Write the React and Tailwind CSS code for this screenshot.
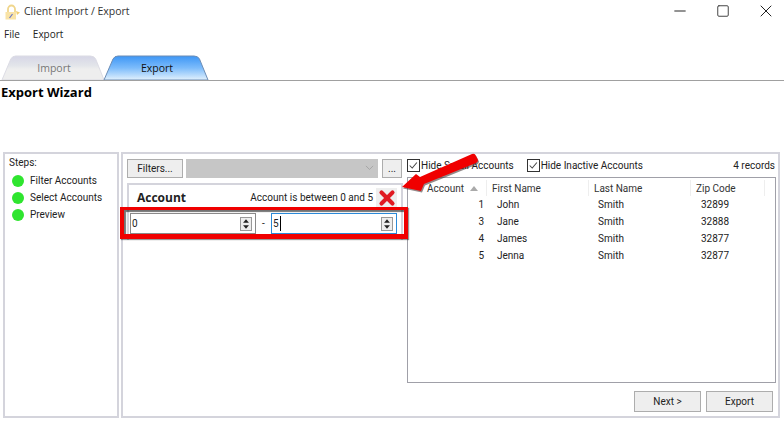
import { Minus, Square, X } from "lucide-react";

const rows = [
  { account: 1, first: "John", last: "Smith", zip: "32899" },
  { account: 3, first: "Jane", last: "Smith", zip: "32888" },
  { account: 4, first: "James", last: "Smith", zip: "32877" },
  { account: 5, first: "Jenna", last: "Smith", zip: "32877" },
];

function Spinner() {
  return (
    <div className="flex h-[14px] w-[12px] flex-col justify-between border border-[#999] bg-[#eee]">
      <svg viewBox="0 0 12 6" className="h-[6px] w-full">
        <path d="M2.5 5 6 1l3.5 4z" fill="#222" />
      </svg>
      <svg viewBox="0 0 12 6" className="h-[6px] w-full">
        <path d="M2.5 1 6 5l3.5-4z" fill="#222" />
      </svg>
    </div>
  );
}

function Check({ label }) {
  return (
    <div className="flex items-center gap-px">
      <div className="flex size-[13px] items-center justify-center border border-[#333] bg-white">
        <svg viewBox="0 0 13 13" className="size-[11px]">
          <path d="M2 6.5 5 9.5 10.5 3" fill="none" stroke="#444" strokeWidth="1.2" />
        </svg>
      </div>
      <span>{label}</span>
    </div>
  );
}

function Tab({ label, active }) {
  return (
    <div className={`relative flex h-[25px] items-center justify-center pl-[2px] pt-[3px] font-['Open_Sans',sans-serif] text-[10.5px] ${active ? "-ml-[2px] w-[106px] text-[#111]" : "w-[104px] text-[#777]"}`}>
      <svg viewBox="0 0 106 25" preserveAspectRatio="none" className="absolute inset-0 size-full">
        <defs>
          <linearGradient id={`tab-${label}`} x1="0" y1="0" x2="0" y2="1">
            {active ? (
              <>
                <stop offset="0" stopColor="#3d96f5" />
                <stop offset="0.5" stopColor="#7dbcfb" />
                <stop offset="1" stopColor="#e2f1fd" />
              </>
            ) : (
              <>
                <stop offset="0" stopColor="#d6d6e6" />
                <stop offset="0.4" stopColor="#e3e5ea" />
                <stop offset="0.55" stopColor="#eeeeee" />
                <stop offset="1" stopColor="#eeeeee" />
              </>
            )}
          </linearGradient>
        </defs>
        <path
          d="M1 25 L10 4 Q11.5 1 15 1 L91 1 Q95 1 96.5 4 L105 25 Z"
          fill={`url(#tab-${label})`}
          stroke={active ? "#6d8db5" : "#dcdce4"}
        />
      </svg>
      <span className="relative">{label}</span>
    </div>
  );
}

export default function App() {
  return (
    <div className="relative flex h-[422px] w-[784px] flex-col overflow-hidden bg-white font-['Roboto','Open_Sans',sans-serif] text-[10px] text-[#222]">
      {/* title bar */}
      <div className="flex h-[24px] items-center justify-between pl-[4px] font-['Open_Sans',sans-serif] text-[10.5px]">
        <div className="flex items-center gap-[4px]">
          <svg viewBox="0 0 16 16" className="size-[16px]">
            <path d="M4 8V5a3.5 3.5 0 0 1 7 0v3" fill="none" stroke="#f0d68c" strokeWidth="1.8" />
            <rect x="1.5" y="8" width="10.5" height="7.5" fill="#f9e3a6" />
            <path d="M5.5 14l3-4" stroke="#6a78c8" strokeWidth="1.2" />
            <path d="M12 7l4 1.5-3 2.5z" fill="#f0cc70" />
          </svg>
          <span className="text-[#333]">Client Import / Export</span>
        </div>
        <div className="flex items-center gap-[7px] pb-[3px]">
          <div className="flex w-[36px] justify-center">
            <Minus size={18} strokeWidth={1.3} />
          </div>
          <div className="flex w-[36px] justify-center">
            <Square size={14} strokeWidth={1.7} className="text-[#444]" />
          </div>
          <div className="flex w-[36px] justify-center">
            <X size={20} strokeWidth={1.2} />
          </div>
        </div>
      </div>
      {/* menu */}
      <div className="flex h-[21px] items-center gap-[13px] pl-[4px] font-['Open_Sans',sans-serif]">
        <span>File</span>
        <span>Export</span>
      </div>
      {/* tabs */}
      <div className="mt-[10px] flex h-[26px] items-end border-b border-[#a0a0a0] pl-[1px]">
        <Tab label="Import" />
        <Tab label="Export" active />
      </div>
      <div className="h-[71px] pl-[1px] pt-[2px] font-['Open_Sans',sans-serif] text-[13px] leading-[19px] font-bold text-black">Export Wizard</div>

      {/* body */}
      <div className="flex gap-[2px] pl-[3px]">
        <div className="h-[266px] w-[116px] border-2 border-[#d4d4dc] pl-[4px] pt-[1px]">
          <div className="leading-[15px]">Steps:</div>
          <div className="mt-[2px] flex flex-col">
            {["Filter Accounts", "Select Accounts", "Preview"].map((step) => (
              <div key={step} className="flex h-[17px] items-center gap-[6px] pl-[3px]">
                <div className="size-[12px] rounded-full bg-[#2fe52f]" />
                <span>{step}</span>
              </div>
            ))}
          </div>
        </div>

        <div className="flex h-[266px] w-[659px] gap-[4px] border-2 border-[#d4d4dc] pl-[4px] pt-[4px]">
          <div className="w-[276px]">
            <div className="flex h-[20px] items-center">
              <div className="flex h-[19px] w-[56px] items-center justify-center border border-[#adadad] bg-[#eee]">Filters...</div>
              <div className="ml-[3px] flex h-[19px] w-[192px] items-center justify-end bg-[#c6c6c6] pr-[4px]">
                <svg viewBox="0 0 10 6" className="w-[9px]">
                  <path d="M1 1l4 4 4-4" fill="none" stroke="#a4a4a4" />
                </svg>
              </div>
              <div className="ml-[4px] flex h-[19px] w-[20px] items-center justify-center border border-[#adadad] bg-[#eee]">...</div>
            </div>
            <div className="mt-[5px] h-[57px] border-2 border-b-0 border-[#d4d4dc]">
              <div className="flex h-[26px] items-center justify-between pl-[8px] pr-[4px]">
                <span className="font-['Open_Sans',sans-serif] text-[12px] font-bold text-[#222]">Account</span>
                <div className="flex items-center gap-[3px]">
                  <span className="pb-px">Account is between 0 and 5</span>
                  <div className="flex size-[21px] items-center justify-center bg-[#eee] pb-px">
                    <X size={22} strokeWidth={4.5} className="shrink-0 text-[#e01a22]" />
                  </div>
                </div>
              </div>
              <div className="mt-[2px] flex items-center pl-[1px] pr-[3px]">
                <div className="flex h-[21px] w-[126px] items-center justify-between border border-[#8a8a8a] pl-[1px] pr-[3px]">
                  <span>0</span>
                  <Spinner />
                </div>
                <span className="flex w-[15px] justify-center">-</span>
                <div className="flex h-[21px] w-[126px] items-center justify-between border border-[#2a8ad8] pl-[1px] pr-[3px]">
                  <span className="border-r border-black pr-px">5</span>
                  <Spinner />
                </div>
              </div>
            </div>
          </div>

          <div className="-mt-[3px] w-[370px]">
            <div className="flex h-[20px] items-center justify-between pr-[2px]">
              <div className="flex gap-[13px]">
                <Check label="Hide Small Accounts" />
                <Check label="Hide Inactive Accounts" />
              </div>
              <span>4 records</span>
            </div>
            <div className="mt-[2px] h-[206px] w-[369px] border border-[#a0a0a8] pt-[2px]">
              <div className="flex h-[16px] items-center text-[#333]">
                <div className="flex h-full w-[79px] items-center border-r border-[#eee] pl-[19px]">
                  <span>Account</span>
                  <svg viewBox="0 0 8 5" className="ml-[6px] w-[8px]">
                    <path d="M0 5 4 0l4 5z" fill="#aaa" />
                  </svg>
                </div>
                <div className="flex h-full w-[102px] items-center border-r border-[#eee] pl-[5px]">First Name</div>
                <div className="flex h-full w-[102px] items-center border-r border-[#eee] pl-[5px]">Last Name</div>
                <div className="flex h-full w-[74px] items-center border-r border-[#eee] pl-[5px]">Zip Code</div>
              </div>
              {rows.map((row) => (
                <div key={row.account} className="flex h-[17px] items-center">
                  <div className="w-[76px] text-right">{row.account}</div>
                  <div className="w-[102px] pl-[13px]">{row.first}</div>
                  <div className="w-[102px] pl-[12px]">{row.last}</div>
                  <div className="w-[74px] pl-[13px]">{row.zip}</div>
                </div>
              ))}
            </div>
            <div className="mt-[8px] flex justify-end gap-[5px] pr-[4px]">
              <div className="flex h-[21px] w-[67px] items-center justify-center border border-[#adadad] bg-[#eee]">Next &gt;</div>
              <div className="flex h-[21px] w-[67px] items-center justify-center border border-[#adadad] bg-[#eee]">Export</div>
            </div>
          </div>
        </div>
      </div>

      {/* red callouts over the screenshot */}
      <div className="absolute left-[120px] top-[207px] h-[32px] w-[288px] border-x-[4px] border-t-[3px] border-b-[5px] border-[#f00000] shadow-[inset_2px_2px_1px_rgba(0,0,0,0.55),1px_1px_1px_rgba(0,0,0,0.4)]" />
      <svg viewBox="0 0 784 422" className="pointer-events-none absolute inset-0 h-[422px] w-[784px]">
        <path d="M402 187 L416 174 L420 177 L472 154 Q475 153 476 156 L478 160 Q478 162 476 163 L424 184 L421 191 Z" fill="#3a2a2a" transform="translate(1 1.5)" opacity="0.55" />
        <path d="M402 187 L416 174 L420 177 L472 154 Q475 153 476 156 L478 160 Q478 162 476 163 L424 184 L421 191 Z" fill="#f00000" />
      </svg>
    </div>
  );
}
